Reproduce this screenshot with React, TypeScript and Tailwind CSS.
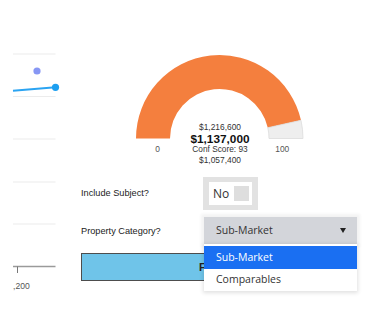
import React from "react";

const sans = { fontFamily: '"Liberation Sans", Arial, sans-serif' };
const open = { fontFamily: '"Open Sans", "Noto Sans", sans-serif' };

function LeftChart() {
  return (
    <svg width={70} height={312} className="shrink-0 block" style={sans}>
      {[54, 96.5, 139, 182, 224].map((y) => (
        <line key={y} x1={13} x2={55.5} y1={y} y2={y} stroke="#ececec" strokeWidth={1.2} />
      ))}
      <line x1={13} x2={55.5} y1={266.5} y2={266.5} stroke="#9a9a9a" strokeWidth={1.5} />
      <line x1={17.5} x2={17.5} y1={266.5} y2={273} stroke="#777" strokeWidth={1} />
      <text x={13} y={288.5} fontSize={8.6} fill="#555">,200</text>
      <circle cx={37} cy={71} r={3.6} fill="#8797f4" />
      <line x1={13} y1={90.8} x2={55.5} y2={87.3} stroke="#2ba4f2" strokeWidth={2} />
      <circle cx={55.5} cy={87.3} r={3.6} fill="#1d9ff0" />
    </svg>
  );
}

function Gauge() {
  return (
    <svg width={295} height={170} className="block" style={sans}>
      <path
        d="M66 138.5 A83.5 83.5 0 0 1 230.99 120.29 L197.81 127.7 A49.5 49.5 0 0 0 100 138.5 Z"
        fill="#f47f3e"
      />
      <path
        d="M230.99 120.29 A83.5 83.5 0 0 1 233 138.5 L199 138.5 A49.5 49.5 0 0 0 197.81 127.7 Z"
        fill="#eeeeee"
        stroke="#dcdcdc"
        strokeWidth={0.8}
      />
      <text x={87.7} y={152} fontSize={8.4} fill="#555" textAnchor="middle">0</text>
      <text x={212.3} y={152} fontSize={8.4} fill="#555" textAnchor="middle">100</text>
      <text x={150} y={129.5} fontSize={8.4} fill="#333" textAnchor="middle">$1,216,600</text>
      <text x={150} y={142.6} fontSize={11.8} fontWeight="bold" fill="#111" textAnchor="middle">$1,137,000</text>
      <text x={150} y={152.2} fontSize={8.3} fill="#333" textAnchor="middle">Conf Score: 93</text>
      <text x={150} y={162.5} fontSize={8.4} fill="#333" textAnchor="middle">$1,057,400</text>
    </svg>
  );
}

export default function App() {
  return (
    <div className="w-[365px] h-[312px] bg-white flex overflow-hidden">
      <LeftChart />
      <div className="flex flex-col w-[295px]">
        <Gauge />
        <div className="pl-[11px] flex flex-col">
          <div className="flex items-center mt-[7px] h-[33px]">
            <div className="w-[122px] text-[9.2px] text-[#222]" style={sans}>
              Include Subject?
            </div>
            <div className="w-[55px] h-[33px] bg-[#e2e2e2] px-[6px] py-[5px]">
              <div className="w-full h-full bg-white flex items-center pl-[4px] pr-[3px] justify-between">
                <span className="text-[12px] text-[#333] leading-none" style={open}>No</span>
                <span className="w-[15px] h-[15px] bg-[#dedede]" />
              </div>
            </div>
          </div>
          <div className="flex items-center mt-[7px] h-[27px]">
            <div className="w-[122px] text-[9.2px] text-[#222] mt-[2px]" style={sans}>
              Property Category?
            </div>
            <div className="relative ml-[1px] z-10">
              <div className="w-[153px] h-[27px] bg-[#d3d5da] flex items-center justify-between pl-[12px] pr-[11px] shadow-[0_0_3px_3px_rgba(0,0,0,0.05)]">
                <span className="text-[10.5px] text-[#333]" style={open}>Sub-Market</span>
                <svg width={6} height={5} viewBox="0 0 6 5">
                  <path d="M0 0 L6 0 L3 5 Z" fill="#222" />
                </svg>
              </div>
              <div className="absolute left-0 top-[27px] w-[153px] bg-white pt-[2px] shadow-[0_1px_4px_1px_rgba(0,0,0,0.12)]" style={open}>
                <div className="h-[23px] bg-[#1a6ff2] text-white text-[10.5px] flex items-center pl-[12px]">
                  Sub-Market
                </div>
                <div className="h-[22px] text-[#333] text-[10.5px] flex items-center pl-[12px]">
                  Comparables
                </div>
              </div>
            </div>
          </div>
          <div className="mt-[9px] w-[276px] h-[28px] bg-[#6fc4e9] border border-[#4d4d4d] flex items-center pl-[117px] text-[11px] font-bold text-[#222]" style={sans}>
            Filter
          </div>
        </div>
      </div>
    </div>
  );
}
